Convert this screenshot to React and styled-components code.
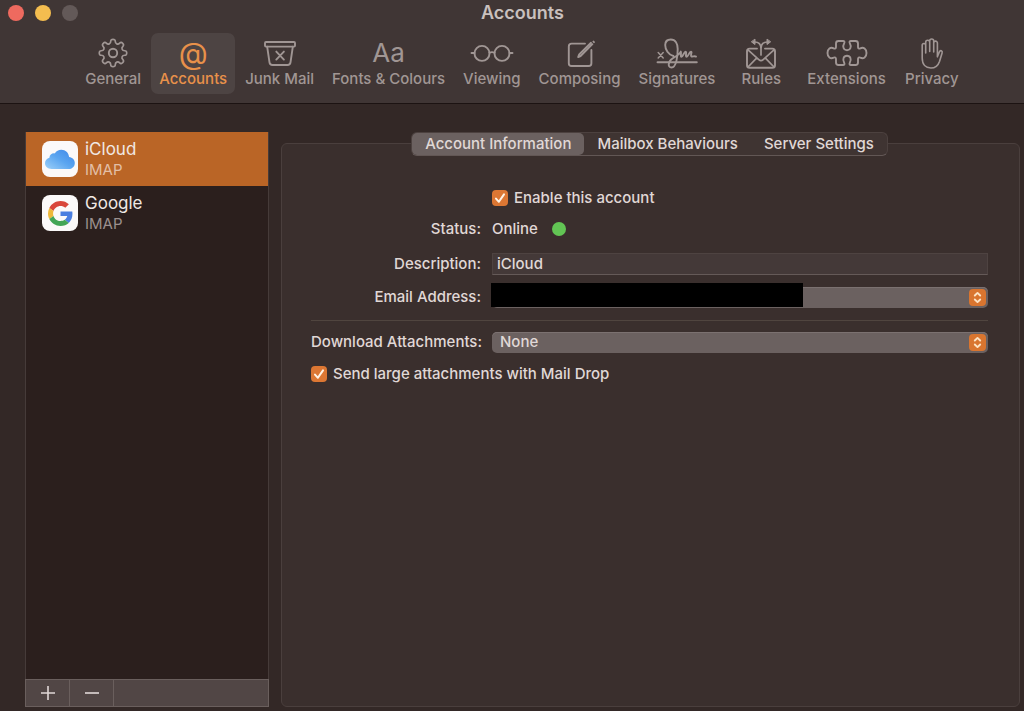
import React, { useState } from 'react';
import styled, { createGlobalStyle } from 'styled-components';

const GlobalStyle = createGlobalStyle`
  * {
    box-sizing: border-box;
  }

  body {
    margin: 0;
    background: #332826;
    color: #e0d8d6;
    font-family: Inter, "Liberation Sans", sans-serif;
    font-size: 15px;
    line-height: 18px;
  }

  button, input, select {
    font: inherit;
    color: inherit;
    margin: 0;
  }
`;

const Window = styled.div`
  min-height: 100vh;
  display: flex;
  flex-direction: column;
`;

const Header = styled.header`
  background: #403635;
  border-bottom: 1px solid #1c1312;
  padding: 0 4px 9px 25px;
`;

const TitleBar = styled.div`
  height: 33px;
  display: flex;
  justify-content: center;
  padding-top: 4px;
`;

const Title = styled.h1`
  margin: 0;
  font-size: 18px;
  line-height: 18px;
  font-weight: 600;
  color: #c9c0be;
`;

const Lights = styled.div`
  position: absolute;
  top: 5px;
  left: 8px;
  display: flex;
  gap: 11px;
`;

const Light = styled.button`
  width: 16px;
  height: 16px;
  padding: 0;
  border: none;
  border-radius: 50%;
  background: ${(props) => props.$color};
`;

const Toolbar = styled.nav`
  display: flex;
  justify-content: center;
  gap: 2px;
`;

const Tool = styled.button`
  min-width: 72px;
  height: 61px;
  padding: 4px 8px 6px;
  border: none;
  border-radius: 7px;
  display: flex;
  flex-direction: column;
  align-items: center;
  gap: 1px;
  white-space: nowrap;
  background: ${(props) => (props.$active ? '#4d4443' : 'transparent')};
  color: ${(props) => (props.$active ? '#e8914a' : '#a09694')};
`;

const ToolIcon = styled.span`
  height: 32px;
  display: flex;
  align-items: center;
  justify-content: center;
`;

const Glyph = styled.span`
  font-size: ${(props) => props.$size}px;
  line-height: 32px;
  font-weight: 400;
`;

const ToolLabel = styled.span`
  line-height: 18px;
  font-weight: 500;
`;

const Content = styled.main`
  flex: 1;
  display: flex;
  gap: 12px;
  padding: 28px 4px 4px 25px;
`;

const Sidebar = styled.aside`
  width: 244px;
  display: flex;
  flex-direction: column;
`;

const AccountList = styled.ul`
  flex: 1;
  margin: 0;
  padding: 0;
  list-style: none;
  background: #2b1f1d;
  border: 1px solid #463b39;
  border-width: 0 1px;
`;

const Account = styled.button`
  width: 100%;
  height: 54px;
  padding: 0 16px;
  border: none;
  display: flex;
  align-items: center;
  gap: 7px;
  text-align: left;
  background: ${(props) => (props.$active ? '#ba6526' : 'transparent')};
`;

const AccountIcon = styled.span`
  width: 36px;
  height: 36px;
  border-radius: 8px;
  background: #fbf9f9;
  display: flex;
  align-items: center;
  justify-content: center;
`;

const AccountText = styled.span`
  display: flex;
  flex-direction: column;
`;

const AccountName = styled.span`
  font-size: 17px;
  line-height: 22px;
  color: #f0e8e4;
`;

const AccountType = styled.span`
  line-height: 20px;
  color: ${(props) => (props.$active ? '#e3bfa6' : '#9b908e')};
`;

const ListFooter = styled.div`
  height: 28px;
  display: flex;
  background: #514645;
  border: 1px solid #6a5f5d;
`;

const FooterButton = styled.button`
  width: 44px;
  padding: 0;
  border: none;
  border-right: 1px solid #6a5f5d;
  background: none;
  display: flex;
  align-items: center;
  justify-content: center;
`;

const Panel = styled.section`
  flex: 1;
  margin-top: 11px;
  padding: 0 31px 0 29px;
  border: 1px solid #4a3f3d;
  border-radius: 6px;
  background: #3a2f2d;
`;

const Tabs = styled.div`
  width: fit-content;
  margin: -12px auto 30px;
  display: flex;
  border: 1px solid #4c413f;
  border-bottom-color: #625755;
  border-radius: 6px;
  background: #3f3432;
`;

const Tab = styled.button`
  height: 22px;
  padding: 0 13px 1px;
  border: none;
  border-radius: 5px;
  font-weight: 500;
  white-space: nowrap;
  background: ${(props) => (props.$active ? '#6b6160' : 'transparent')};
`;

const Form = styled.form`
  display: flex;
  flex-direction: column;
  font-weight: 500;
`;

const Row = styled.div`
  display: grid;
  grid-template-columns: 170px 1fr;
  column-gap: 11px;
  align-items: center;
  height: ${(props) => props.$height}px;
`;

const Label = styled.label`
  text-align: right;
  white-space: nowrap;
`;

const CheckLabel = styled.label`
  grid-column: ${(props) => (props.$inset ? 2 : '1 / -1')};
  display: flex;
  align-items: center;
  gap: 6px;
`;

const CheckBox = styled.span`
  position: relative;
  width: 16px;
  height: 16px;
  flex: none;

  input {
    appearance: none;
    display: block;
    width: 16px;
    height: 16px;
    border-radius: 4px;
    background: #6b6160;
  }

  input:checked {
    background: #dc7733;
  }

  svg {
    position: absolute;
    inset: 0;
    pointer-events: none;
  }
`;

const Status = styled.span`
  display: flex;
  align-items: center;
  gap: 14px;
`;

const StatusDot = styled.span`
  width: 14px;
  height: 14px;
  border-radius: 50%;
  background: #62c554;
`;

const TextInput = styled.input`
  width: 100%;
  height: 22px;
  padding: 0 4px 1px;
  border: 1px solid #4e4341;
  border-bottom-color: #655a58;
  background: #443938;
`;

const SelectBox = styled.div`
  position: relative;
  width: 100%;

  select {
    appearance: none;
    display: block;
    width: 100%;
    height: 21px;
    padding: 0 24px 0 8px;
    border: none;
    border-radius: 5px;
    background: #6b6160;
    box-shadow: inset 0 1px 0 #7b7170;
  }
`;

const Stepper = styled.span`
  position: absolute;
  top: 2px;
  right: 2px;
  width: 17px;
  height: 17px;
  border-radius: 4px;
  background: #d9752f;
  pointer-events: none;

  svg {
    display: block;
  }
`;

const Redaction = styled.span`
  position: absolute;
  top: -4px;
  left: -1px;
  width: 63%;
  height: 24px;
  background: #000;
`;

const Divider = styled.hr`
  width: 100%;
  height: 1px;
  margin: 7px 0 4px;
  border: none;
  background: #50453f;
`;

const LineIcon = ({ children }) => (
  <svg width="44" height="32" viewBox="0 0 44 32" fill="none" stroke="currentColor" strokeWidth="1.9" strokeLinecap="round" strokeLinejoin="round" aria-hidden="true">
    {children}
  </svg>
);

// eight teeth of four corners each, rounded off by curving between edge midpoints
const gearPath = () => {
  const points = [];
  for (let i = 0; i < 8; i++) {
    [[-13, 10], [-9.5, 13.9], [9.5, 13.9], [13, 10]].forEach(([offset, r]) => {
      const a = ((i * 45 + offset - 90) * Math.PI) / 180;
      points.push([22 + r * Math.cos(a), 16 + r * Math.sin(a)]);
    });
  }
  const mid = (p, q) => `${((p[0] + q[0]) / 2).toFixed(2)} ${((p[1] + q[1]) / 2).toFixed(2)}`;
  const curves = points.map((p, i) => `Q${p[0].toFixed(2)} ${p[1].toFixed(2)} ${mid(p, points[(i + 1) % points.length])}`);
  return `M${mid(points[points.length - 1], points[0])}${curves.join('')}Z`;
};

const GearIcon = () => (
  <LineIcon>
    <path strokeWidth="1.7" d={gearPath()} />
    <circle cx="22" cy="16" r="4.2" />
  </LineIcon>
);

const JunkIcon = () => (
  <LineIcon>
    <rect x="7" y="5" width="30" height="4.6" rx="1" />
    <path d="M9.2 9.8l2.3 15.6a3 3 0 0 0 3 2.6h15a3 3 0 0 0 3-2.6l2.3-15.6M18.3 14.6l7.6 8M25.9 14.6l-7.6 8" />
  </LineIcon>
);

const GlassesIcon = () => (
  <LineIcon>
    <circle cx="12" cy="16.4" r="7.5" />
    <circle cx="32" cy="16.4" r="7.5" />
    <path d="M1.5 16h3M39.5 16h3M19.5 15.6q2.5-1 5 0" />
  </LineIcon>
);

const ComposeIcon = () => (
  <LineIcon>
    <path d="M27 6.6H13.6a2.8 2.8 0 0 0-2.8 2.8v16.8a2.8 2.8 0 0 0 2.8 2.8h17a2.8 2.8 0 0 0 2.8-2.8V13" />
    <path d="M20.2 20l1-2.6L33 5.8M20.2 20l2.4-1L34.4 7.2M35.4 4.6l.6.6" />
  </LineIcon>
);

const SignatureIcon = () => (
  <LineIcon>
    <path strokeWidth="1.5" d="M3.2 15.6l5 5.4M8.2 15.6l-5 5.4" />
    <path d="M2.5 25.2h39.3" />
    <path d="M18.4 19C13.4 18 10.2 12.5 10.2 8C10.2 4.5 12.5 2.5 15.8 2.5C20.5 2.5 22.7 7 22.7 12C22.7 19 21.4 30.5 16.5 30.5C12.5 30.5 12.8 24.5 17.5 21.5C21.5 19 24.5 17.5 25.8 14.6C26.6 16.5 25 19.5 26.4 19.7C28 19.8 29 14.7 30.6 14.7C32 14.7 30 19.7 31.6 19.8C33.2 19.8 34.2 14.6 36 14.7C37.6 14.8 34.8 19 36.6 19.5C38 19.8 39.5 18.7 41 19.6" />
  </LineIcon>
);

const RulesIcon = () => (
  <LineIcon>
    <path d="M18 11.6h-7.4a2.6 2.6 0 0 0-2.6 2.6v14a2.6 2.6 0 0 0 2.6 2.6h22.800a2.6 2.6 0 0 0 2.6-2.6v-14a2.6 2.6 0 0 0-2.6-2.6H26" />
    <path strokeWidth="1.7" d="M9 12.8l10.8 9.8q2.2 2 4.4 0L35 12.8M9 30l8.800-9.200M35 30l-8.800-9.200M22 18v-6.5c0-4-2-6.500-6.500-6.500M22 11.500c0-4 2-6.500 6.500-6.500" />
    <path fill="currentColor" strokeWidth="1" d="M16 2.500v5L12.600 5zM28 2.500v5L31.400 5z" />
  </LineIcon>
);

const PuzzleIcon = () => (
  <LineIcon>
    <path d="M13.500 4h4.500c1.500 0 1.800 1 1.200 2.200c-2 3.500-.6 7 2.800 7s4.800-3.500 2.800-7c-.6-1.200-.3-2.200 1.200-2.200h4.500c1.600 0 2.500 1 2.500 2.500v3.500c0 1.500 1 2 2.300 1.300c3.200-1.600 6.200.6 6.200 4.700s-3 6.300-6.200 4.700c-1.300-.7-2.300-.2-2.300 1.300v3.500c0 1.500-.9 2.500-2.500 2.500h-4.500c-1.500 0-1.800-1-1.200-2.200c2-3.500.6-7-2.800-7s-4.800 3.500-2.800 7c.6 1.200.3 2.200-1.200 2.200h-4.500c-1.600 0-2.500-1-2.500-2.500v-3.500c0-1.500-1-2-2.300-1.300C5.500 22.300 2.500 20.100 2.500 16s3-6.300 6.200-4.700c1.300.7 2.300.2 2.300-1.300v-3.500c0-1.500.9-2.500 2.500-2.500z" />
  </LineIcon>
);

const HandIcon = () => (
  <LineIcon>
    <path strokeWidth="1.6" d="M15.700 16V8.300a1.700 1.700 0 0 0-3.500 0V21c0 6.500 3.700 10 8.700 10c4.500 0 7.200-2.500 8.600-6.600l2.600-8.300c.7-2.400-1.800-3.300-2.700-1.200l-2 4.900V6a1.800 1.800 0 0 0-3.700 0v9M15.700 15V5.300a1.900 1.900 0 0 1 4 0V14.500M19.700 5V4a2 2 0 0 1 4 0v11" />
  </LineIcon>
);

const CloudIcon = () => (
  <svg width="36" height="36" viewBox="0 0 36 36" aria-hidden="true">
    <defs>
      <linearGradient id="cloud" x1="1" y1="0" x2="0" y2="1">
        <stop offset="0" stopColor="#3f86e8" />
        <stop offset="0.5" stopColor="#5aa5f0" />
        <stop offset="1" stopColor="#9dd0f8" />
      </linearGradient>
    </defs>
    <path fill="url(#cloud)" d="M9.500 28C5.800 28 3 25.500 3 22.300c0-2.800 1.900-4.900 4.400-5.500C7.600 13.800 10 12 12.800 12.400C14.200 10 16.600 8.800 19.300 8.800c4.300 0 7.300 3 7.800 7.200c3.400.4 5.700 2.700 5.700 5.900c0 3.500-2.600 6.100-6.200 6.100z" />
  </svg>
);

const GoogleIcon = () => (
  <svg width="25" height="25" viewBox="0 0 48 48" aria-hidden="true">
    <path fill="#d9463b" d="M24 9.500c3.540 0 6.710 1.220 9.210 3.600l6.850-6.850C35.900 2.380 30.470 0 24 0 14.620 0 6.510 5.380 2.560 13.220l7.980 6.190C12.430 13.720 17.740 9.500 24 9.500z" />
    <path fill="#4a7ee0" d="M46.980 24.550c0-1.570-.15-3.090-.38-4.550H24v9.020h12.940c-.58 2.960-2.260 5.480-4.780 7.180l7.730 6c4.510-4.180 7.090-10.360 7.090-17.650z" />
    <path fill="#eeb83a" d="M10.530 28.590c-.48-1.450-.76-2.990-.76-4.590s.27-3.140.76-4.590l-7.980-6.190C.92 16.460 0 20.120 0 24c0 3.880.92 7.540 2.560 10.780l7.970-6.190z" />
    <path fill="#43a556" d="M24 48c6.480 0 11.930-2.130 15.890-5.810l-7.730-6c-2.150 1.450-4.920 2.300-8.160 2.300-6.260 0-11.570-4.220-13.470-9.910l-7.980 6.190C6.510 42.620 14.620 48 24 48z" />
  </svg>
);

const tools = [
  { name: 'General', icon: <GearIcon /> },
  { name: 'Accounts', icon: <Glyph $size={30} aria-hidden="true">@</Glyph> },
  { name: 'Junk Mail', icon: <JunkIcon /> },
  { name: 'Fonts & Colours', icon: <Glyph $size={26} aria-hidden="true">Aa</Glyph> },
  { name: 'Viewing', icon: <GlassesIcon /> },
  { name: 'Composing', icon: <ComposeIcon /> },
  { name: 'Signatures', icon: <SignatureIcon /> },
  { name: 'Rules', icon: <RulesIcon /> },
  { name: 'Extensions', icon: <PuzzleIcon /> },
  { name: 'Privacy', icon: <HandIcon /> },
];

const accounts = [
  { name: 'iCloud', type: 'IMAP', icon: <CloudIcon /> },
  { name: 'Google', type: 'IMAP', icon: <GoogleIcon /> },
];

const tabs = ['Account Information', 'Mailbox Behaviours', 'Server Settings'];

function Check({ inset, children }) {
  const [checked, setChecked] = useState(true);

  return (
    <CheckLabel $inset={inset}>
      <CheckBox>
        <input type="checkbox" checked={checked} onChange={() => setChecked(!checked)} />
        {checked && (
          <svg width="16" height="16" viewBox="0 0 16 16" fill="none" stroke="#fff3e4" strokeWidth="2" strokeLinecap="round" strokeLinejoin="round">
            <path d="M4 8.6l2.9 3.2L12 4.4" />
          </svg>
        )}
      </CheckBox>
      {children}
    </CheckLabel>
  );
}

function Select({ id, options, redacted }) {
  return (
    <SelectBox>
      <select id={id}>
        {options.map((option) => <option key={option}>{option}</option>)}
      </select>
      <Stepper>
        <svg width="17" height="17" viewBox="0 0 17 17" fill="none" stroke="#fde3c4" strokeWidth="1.9" strokeLinecap="round" strokeLinejoin="round">
          <path d="M5.8 6.5l2.7-2.6 2.7 2.6M5.8 10.5l2.7 2.6 2.7-2.6" />
        </svg>
      </Stepper>
      {redacted && <Redaction />}
    </SelectBox>
  );
}

function App() {
  const [tool, setTool] = useState('Accounts');
  const [account, setAccount] = useState('iCloud');
  const [tab, setTab] = useState(tabs[0]);

  return (
    <Window>
      <GlobalStyle />
      <Header>
        <Lights>
          <Light $color="#ee6a5f" aria-label="Close" />
          <Light $color="#f4bd4f" aria-label="Minimise" />
          <Light $color="#635958" aria-label="Zoom" />
        </Lights>
        <TitleBar>
          <Title>Accounts</Title>
        </TitleBar>
        <Toolbar>
          {tools.map((item) => (
            <Tool key={item.name} $active={item.name === tool} onClick={() => setTool(item.name)}>
              <ToolIcon>{item.icon}</ToolIcon>
              <ToolLabel>{item.name}</ToolLabel>
            </Tool>
          ))}
        </Toolbar>
      </Header>

      <Content>
        <Sidebar>
          <AccountList>
            {accounts.map((item) => (
              <li key={item.name}>
                <Account $active={item.name === account} onClick={() => setAccount(item.name)}>
                  <AccountIcon>{item.icon}</AccountIcon>
                  <AccountText>
                    <AccountName>{item.name}</AccountName>
                    <AccountType $active={item.name === account}>{item.type}</AccountType>
                  </AccountText>
                </Account>
              </li>
            ))}
          </AccountList>
          <ListFooter>
            <FooterButton aria-label="Add account">
              <svg width="16" height="16" viewBox="0 0 16 16" stroke="#e0d8d6" strokeWidth="1.6"><path d="M1 8h14M8 1v14" /></svg>
            </FooterButton>
            <FooterButton aria-label="Remove account">
              <svg width="16" height="16" viewBox="0 0 16 16" stroke="#e0d8d6" strokeWidth="1.6"><path d="M1 8h14" /></svg>
            </FooterButton>
          </ListFooter>
        </Sidebar>

        <Panel>
          <Tabs role="tablist">
            {tabs.map((name) => (
              <Tab key={name} role="tab" aria-selected={name === tab} $active={name === tab} onClick={() => setTab(name)}>
                {name}
              </Tab>
            ))}
          </Tabs>
          <Form>
            <Row $height={24}>
              <Check inset>Enable this account</Check>
            </Row>
            <Row $height={37}>
              <Label as="span">Status:</Label>
              <Status>Online <StatusDot /></Status>
            </Row>
            <Row $height={34}>
              <Label htmlFor="description">Description:</Label>
              <TextInput id="description" defaultValue="iCloud" />
            </Row>
            <Row $height={32}>
              <Label htmlFor="email">Email Address:</Label>
              <Select id="email" options={['']} redacted />
            </Row>
            <Divider />
            <Row $height={34}>
              <Label htmlFor="download">Download Attachments:</Label>
              <Select id="download" options={['None', 'Recent', 'All']} />
            </Row>
            <Row $height={30}>
              <Check>Send large attachments with Mail Drop</Check>
            </Row>
          </Form>
        </Panel>
      </Content>
    </Window>
  );
}

export default App;
